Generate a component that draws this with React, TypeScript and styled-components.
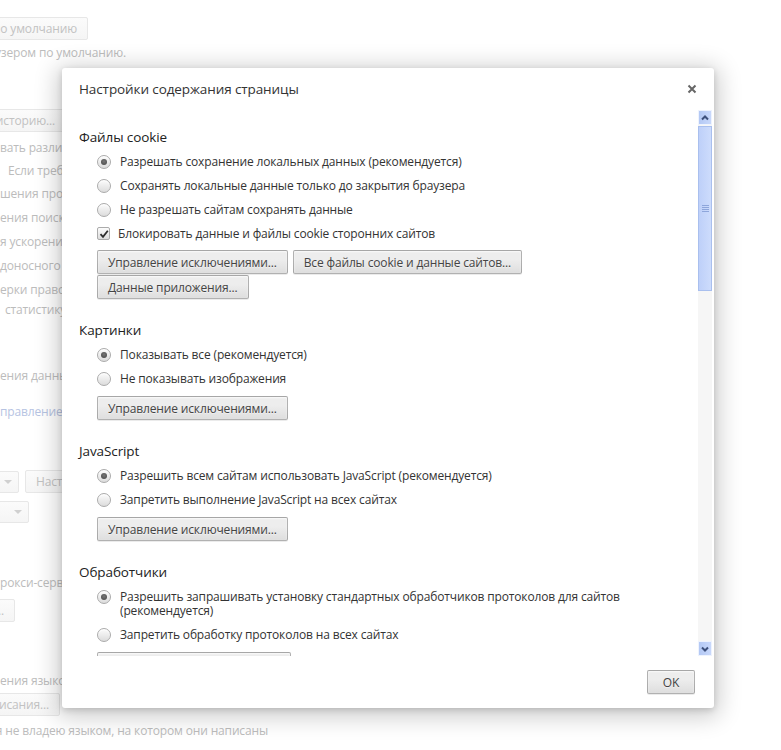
import React from "react";
import styled, { createGlobalStyle } from "styled-components";

const GlobalStyle = createGlobalStyle`
  html, body {
    margin: 0;
    padding: 0;
    background: #fff;
  }
  body {
    font-family: "Open Sans", "Noto Sans", sans-serif;
    font-size: 12px;
    letter-spacing: -0.15px;
    color: #333;
  }
`;

const Page = styled.div`
  position: relative;
  width: 781px;
  height: 750px;
  overflow: hidden;
  background: #fff;
`;

/* ---------- faded settings page behind the dialog ---------- */

const Backdrop = styled.div`
  display: flex;
  flex-direction: column;
  align-items: flex-start;
  padding-top: 17px;
  white-space: nowrap;
  color: #bcbcbc;
`;

/* the part of the page that the dialog covers, cut at the dialog's left edge */
const Covered = styled.div`
  display: flex;
  flex-direction: column;
  align-items: flex-start;
  width: 64px;
  overflow: hidden;
`;

const BgText = styled.div<{ $top?: number; $indent?: number; $end?: number; $link?: boolean }>`
  display: flex;
  justify-content: ${(p) => (p.$end ? "flex-end" : "flex-start")};
  width: ${(p) => (p.$end ? `${p.$end}px` : "auto")};
  overflow: hidden;
  margin-top: ${(p) => p.$top ?? 0}px;
  padding-left: ${(p) => p.$indent ?? 0}px;
  line-height: 20px;
  color: ${(p) => (p.$link ? "#b6c3e2" : "#bcbcbc")};
`;

const BgButton = styled.div<{ $top?: number; $right: number }>`
  display: flex;
  justify-content: flex-end;
  align-items: center;
  overflow: hidden;
  box-sizing: border-box;
  height: 23px;
  margin-top: ${(p) => p.$top ?? 0}px;
  margin-left: -40px;
  width: ${(p) => p.$right + 40}px;
  padding-right: 10px;
  border: 1px solid #e7e7e7;
  border-radius: 2px;
  background: linear-gradient(#fbfbfb, #f5f5f5);
  color: #c2c2c2;
`;

const BgRow = styled.div<{ $top?: number }>`
  display: flex;
  align-items: center;
  gap: 6px;
  margin-top: ${(p) => p.$top ?? 0}px;
`;

const BgSelect = styled.div<{ $right: number }>`
  flex: none;
  display: flex;
  justify-content: flex-end;
  align-items: center;
  box-sizing: border-box;
  height: 22px;
  margin-left: -60px;
  width: ${(p) => p.$right + 60}px;
  padding-right: 6px;
  border: 1px solid #e7e7e7;
  border-radius: 2px;
  background: linear-gradient(#fbfbfb, #f5f5f5);

  &::after {
    content: "";
    border-left: 4px solid transparent;
    border-right: 4px solid transparent;
    border-top: 4px solid #d0d0d0;
  }
`;

const BgPlainButton = styled.div`
  display: flex;
  align-items: center;
  box-sizing: border-box;
  height: 23px;
  padding: 0 10px;
  border: 1px solid #e7e7e7;
  border-radius: 2px;
  background: linear-gradient(#fbfbfb, #f5f5f5);
  color: #c2c2c2;
`;

/* ---------- dialog ---------- */

const Dialog = styled.div`
  position: absolute;
  left: 62px;
  top: 68px;
  width: 652px;
  height: 640px;
  display: flex;
  flex-direction: column;
  background: #fff;
  border-radius: 3px;
  box-shadow: 0 4px 23px 5px rgba(0, 0, 0, 0.2), 0 2px 6px rgba(0, 0, 0, 0.15);
`;

const Header = styled.div`
  display: flex;
  align-items: center;
  justify-content: space-between;
  height: 42px;
  padding: 0 17px;
`;

const Title = styled.h1`
  margin: 0;
  font-size: 13.5px;
  letter-spacing: -0.1px;
  font-weight: normal;
  color: #333;
`;

const CloseButton = styled.button`
  display: flex;
  align-items: center;
  justify-content: center;
  width: 10px;
  height: 10px;
  padding: 0;
  border: none;
  background: none;
`;

const Body = styled.div`
  display: flex;
  height: 546px;
`;

const Content = styled.div`
  flex: 1;
  overflow: hidden;
  padding: 15px 0 0 17px;
`;

const Section = styled.section`
  & + & {
    margin-top: 19px;
  }
`;

const SectionTitle = styled.h3`
  margin: 0 0 1px;
  font-size: 13.5px;
  letter-spacing: -0.1px;
  line-height: 24px;
  font-weight: normal;
  color: #222;
`;

const Option = styled.label`
  display: flex;
  align-items: flex-start;
  padding: 5px 0;
  margin-left: 18px;
  line-height: 14px;
  color: #333;
`;

const Radio = styled.span<{ $checked?: boolean }>`
  flex: none;
  display: flex;
  align-items: center;
  justify-content: center;
  box-sizing: border-box;
  width: 14px;
  height: 14px;
  margin-right: 9px;
  border-radius: 50%;
  border: 1px solid #ababab;
  background: linear-gradient(#fcfcfc, #dcdcdc);
  box-shadow: inset 0 1px 1px #fff;

  &::after {
    content: "";
    display: ${(p) => (p.$checked ? "block" : "none")};
    width: 6px;
    height: 6px;
    border-radius: 50%;
    background: radial-gradient(circle at 50% 40%, #777, #444);
  }
`;

const Checkbox = styled.span`
  flex: none;
  display: flex;
  align-items: center;
  justify-content: center;
  box-sizing: border-box;
  width: 13px;
  height: 13px;
  margin-right: 8px;
  border-radius: 2px;
  border: 1px solid #ababab;
  background: linear-gradient(#fcfcfc, #dcdcdc);
`;

const ButtonRow = styled.div<{ $top: number }>`
  display: flex;
  gap: 5px;
  margin: ${(p) => p.$top}px 0 0 18px;
`;

const Button = styled.button`
  box-sizing: border-box;
  height: 24px;
  padding: 0 10px;
  font-family: inherit;
  font-size: 12px;
  letter-spacing: -0.15px;
  color: #444;
  border: 1px solid rgba(0, 0, 0, 0.25);
  border-radius: 2px;
  background: linear-gradient(#ededed, #ededed 38%, #dedede);
  box-shadow: 0 1px 0 rgba(0, 0, 0, 0.08), inset 0 1px 2px rgba(255, 255, 255, 0.75);
  text-shadow: 0 1px 0 #f0f0f0;
  white-space: nowrap;
`;

const ScrollTrack = styled.div`
  display: flex;
  flex-direction: column;
  width: 14px;
  margin-right: 2px;
  background: #f6f6f6;
`;

const ScrollArrow = styled.div`
  display: flex;
  align-items: center;
  justify-content: center;
  box-sizing: border-box;
  height: 15px;
  border: 1px solid #eef3fe;
  background: linear-gradient(90deg, #b3c8f4, #c8d8fb);
`;

const ScrollThumb = styled.div`
  display: flex;
  align-items: center;
  justify-content: center;
  box-sizing: border-box;
  height: 165px;
  margin-top: 1px;
  border: 1px solid #a9bfee;
  background: linear-gradient(90deg, #bed0f9, #cddcfc);
`;

const ScrollSpace = styled.div`
  flex: 1;
`;

const Footer = styled.div`
  flex: 1;
  display: flex;
  justify-content: flex-end;
  align-items: flex-start;
  padding: 14px 19px 0;
`;

const OkButton = styled(Button)`
  width: 48px;
  padding: 0;
`;

const Chevron = ({ down }: { down?: boolean }) => (
  <svg width="8" height="6" viewBox="0 0 8 6">
    <path
      d={down ? "M1 1.5 L4 4.5 L7 1.5" : "M1 4.5 L4 1.5 L7 4.5"}
      fill="none"
      stroke="#3d507c"
      strokeWidth="2"
    />
  </svg>
);

const Grip = () => (
  <svg width="7" height="7" viewBox="0 0 7 7">
    <path d="M0 0.5 H7 M0 2.5 H7 M0 4.5 H7 M0 6.5 H7" stroke="#8ea6db" strokeWidth="1" />
  </svg>
);

const Check = () => (
  <svg width="10" height="10" viewBox="0 0 10 10">
    <path d="M1.5 5.2 L4 7.8 L8.8 1.8" fill="none" stroke="#2c2c2c" strokeWidth="1.8" />
  </svg>
);

const RadioOption = ({ checked, children }: { checked?: boolean; children: React.ReactNode }) => (
  <Option>
    <Radio $checked={checked} />
    <span>{children}</span>
  </Option>
);

export default function App() {
  return (
    <Page>
      <GlobalStyle />
      <Backdrop>
        <BgButton $right={88}>Назначить браузером по умолчанию</BgButton>
        <BgText $top={3} $end={126}>
          Google Chrome не является браузером по умолчанию.
        </BgText>
        <Covered>
          <BgButton $top={46} $right={66}>
            Очистить историю...
          </BgButton>
          <BgText $top={6}>вать различные веб-службы</BgText>
          <BgText $top={3} $indent={8}>Если требуется</BgText>
          <BgText $top={3}>шения проблем</BgText>
          <BgText $top={4}>ения поисковых</BgText>
          <BgText $top={4}>я ускорения</BgText>
          <BgText $top={4}>доносного ПО</BgText>
          <BgText $top={4}>ерки правописания</BgText>
          <BgText $indent={5}>статистику</BgText>
          <BgText $top={46}>ения данных</BgText>
          <BgText $top={16} $link>
            правление сохранёнными паролями
          </BgText>
          <BgRow $top={48}>
            <BgSelect $right={19} />
            <BgPlainButton>Настроить шрифты...</BgPlainButton>
          </BgRow>
          <BgRow $top={8}>
            <BgSelect $right={29} />
          </BgRow>
          <BgText $top={50}>рокси-сервера</BgText>
          <BgButton $top={6} $right={15}>
            Изменить настройки прокси-сервера...
          </BgButton>
          <BgText $top={49}>ения языков</BgText>
          <BgButton $top={2} $right={60}>
            Проверка правописания...
          </BgButton>
        </Covered>
        <BgText $top={5} $end={268}>
          Предлагать перевод страниц, если я не владею языком, на котором они написаны
        </BgText>
      </Backdrop>

      <Dialog>
        <Header>
          <Title>Настройки содержания страницы</Title>
          <CloseButton aria-label="Закрыть">
            <svg width="10" height="10" viewBox="0 0 10 10">
              <path d="M1.5 1.5 L8.5 8.5 M8.5 1.5 L1.5 8.5" stroke="#666" strokeWidth="2" />
            </svg>
          </CloseButton>
        </Header>

        <Body>
          <Content>
            <Section>
              <SectionTitle>Файлы cookie</SectionTitle>
              <RadioOption checked>Разрешать сохранение локальных данных (рекомендуется)</RadioOption>
              <RadioOption>Сохранять локальные данные только до закрытия браузера</RadioOption>
              <RadioOption>Не разрешать сайтам сохранять данные</RadioOption>
              <Option>
                <Checkbox>
                  <Check />
                </Checkbox>
                <span>Блокировать данные и файлы cookie сторонних сайтов</span>
              </Option>
              <ButtonRow $top={4}>
                <Button>Управление исключениями...</Button>
                <Button>Все файлы cookie и данные сайтов...</Button>
              </ButtonRow>
              <ButtonRow $top={1}>
                <Button>Данные приложения...</Button>
              </ButtonRow>
            </Section>

            <Section>
              <SectionTitle>Картинки</SectionTitle>
              <RadioOption checked>Показывать все (рекомендуется)</RadioOption>
              <RadioOption>Не показывать изображения</RadioOption>
              <ButtonRow $top={5}>
                <Button>Управление исключениями...</Button>
              </ButtonRow>
            </Section>

            <Section>
              <SectionTitle>JavaScript</SectionTitle>
              <RadioOption checked>Разрешить всем сайтам использовать JavaScript (рекомендуется)</RadioOption>
              <RadioOption>Запретить выполнение JavaScript на всех сайтах</RadioOption>
              <ButtonRow $top={5}>
                <Button>Управление исключениями...</Button>
              </ButtonRow>
            </Section>

            <Section>
              <SectionTitle>Обработчики</SectionTitle>
              <RadioOption checked>
                Разрешить запрашивать установку стандартных обработчиков протоколов для сайтов
                <br />
                (рекомендуется)
              </RadioOption>
              <RadioOption>Запретить обработку протоколов на всех сайтах</RadioOption>
              <ButtonRow $top={5}>
                <Button>Управление обработчиками...</Button>
              </ButtonRow>
            </Section>
          </Content>

          <ScrollTrack>
            <ScrollArrow>
              <Chevron />
            </ScrollArrow>
            <ScrollThumb>
              <Grip />
            </ScrollThumb>
            <ScrollSpace />
            <ScrollArrow>
              <Chevron down />
            </ScrollArrow>
          </ScrollTrack>
        </Body>

        <Footer>
          <OkButton>OK</OkButton>
        </Footer>
      </Dialog>
    </Page>
  );
}
